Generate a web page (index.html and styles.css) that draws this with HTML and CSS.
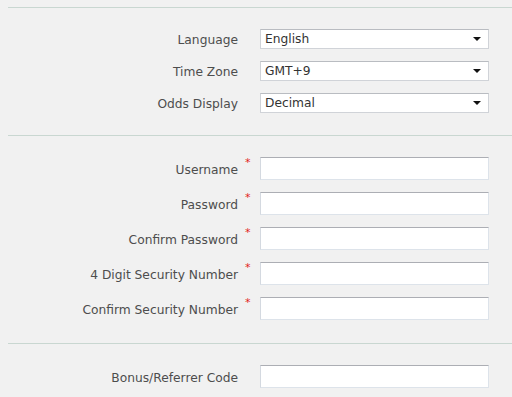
FILE: index.html
```html
<!DOCTYPE html>
<html lang="en">
<head>
    <meta charset="UTF-8">
    <meta name="viewport" content="width=device-width, initial-scale=1.0">
    <title>Account Settings</title>
    <link rel="stylesheet" href="styles.css">
</head>
<body>
    <form class="registo">
        <div class="secao">
            <div class="linha">
                <label class="rotulo">Language</label>
                <span class="req"></span>
                <div class="caixa-select">
                    <select class="campo">
                        <option>English</option>
                    </select>
                </div>
            </div>
            <div class="linha">
                <label class="rotulo">Time Zone</label>
                <span class="req"></span>
                <div class="caixa-select">
                    <select class="campo">
                        <option>GMT+9</option>
                    </select>
                </div>
            </div>
            <div class="linha">
                <label class="rotulo">Odds Display</label>
                <span class="req"></span>
                <div class="caixa-select">
                    <select class="campo">
                        <option>Decimal</option>
                    </select>
                </div>
            </div>
        </div>

        <div class="secao secao-dados">
            <div class="linha">
                <label class="rotulo">Username</label>
                <span class="req">*</span>
                <input class="campo texto" type="text">
            </div>
            <div class="linha">
                <label class="rotulo">Password</label>
                <span class="req">*</span>
                <input class="campo texto" type="password">
            </div>
            <div class="linha">
                <label class="rotulo">Confirm Password</label>
                <span class="req">*</span>
                <input class="campo texto" type="password">
            </div>
            <div class="linha">
                <label class="rotulo">4 Digit Security Number</label>
                <span class="req">*</span>
                <input class="campo texto" type="text">
            </div>
            <div class="linha">
                <label class="rotulo">Confirm Security Number</label>
                <span class="req">*</span>
                <input class="campo texto" type="text">
            </div>
        </div>

        <div class="secao">
            <div class="linha">
                <label class="rotulo">Bonus/Referrer Code</label>
                <span class="req"></span>
                <input class="campo texto" type="text">
            </div>
        </div>
    </form>
</body>
</html>
```

FILE: styles.css
```css
body {
    margin: 0;
    padding: 7px 0 0;
    background-color: #f1f1f1;
    font-family: 'DejaVu Sans', Verdana, sans-serif;
    font-size: 12.25px;
    color: #4a4a4a;
}

.registo {
    margin-left: 8px;
}

.secao {
    border-top: 1px solid #c9d7d1;
    padding: 21px 0 22px;
    display: flex;
    flex-direction: column;
    gap: 12px;
}

.secao-dados {
    padding-bottom: 23px;
}

.linha {
    display: grid;
    grid-template-columns: 230px 22px 229px;
    align-items: center;
}

.rotulo {
    text-align: right;
    color: #4d4d4d;
    padding-top: 2px;
}

.req {
    align-self: start;
    padding-left: 7px;
    padding-top: 1px;
    color: #e2231a;
    font-size: 11px;
    line-height: 10px;
}

.campo {
    box-sizing: border-box;
    width: 229px;
    margin: 0;
    background-color: #ffffff;
    border: 1px solid #dde3ea;
    border-top-color: #acaeb4;
    border-left-color: #d4d9e0;
    font-family: 'DejaVu Sans', Verdana, sans-serif;
    font-size: 12.25px;
    color: #333333;
    outline: none;
}

.texto {
    height: 23px;
    padding: 0 4px;
}

.caixa-select {
    position: relative;
    width: 229px;
}

.caixa-select .campo {
    display: block;
    height: 20px;
    padding: 0 0 0 4px;
    appearance: none;
    -webkit-appearance: none;
    border-radius: 0;
    border-color: #d0d3d8;
    border-top-color: #b9bcc1;
}

.caixa-select::after {
    content: "";
    position: absolute;
    right: 8px;
    top: 8px;
    border-left: 4px solid transparent;
    border-right: 4px solid transparent;
    border-top: 4px solid #111111;
    pointer-events: none;
}
```
